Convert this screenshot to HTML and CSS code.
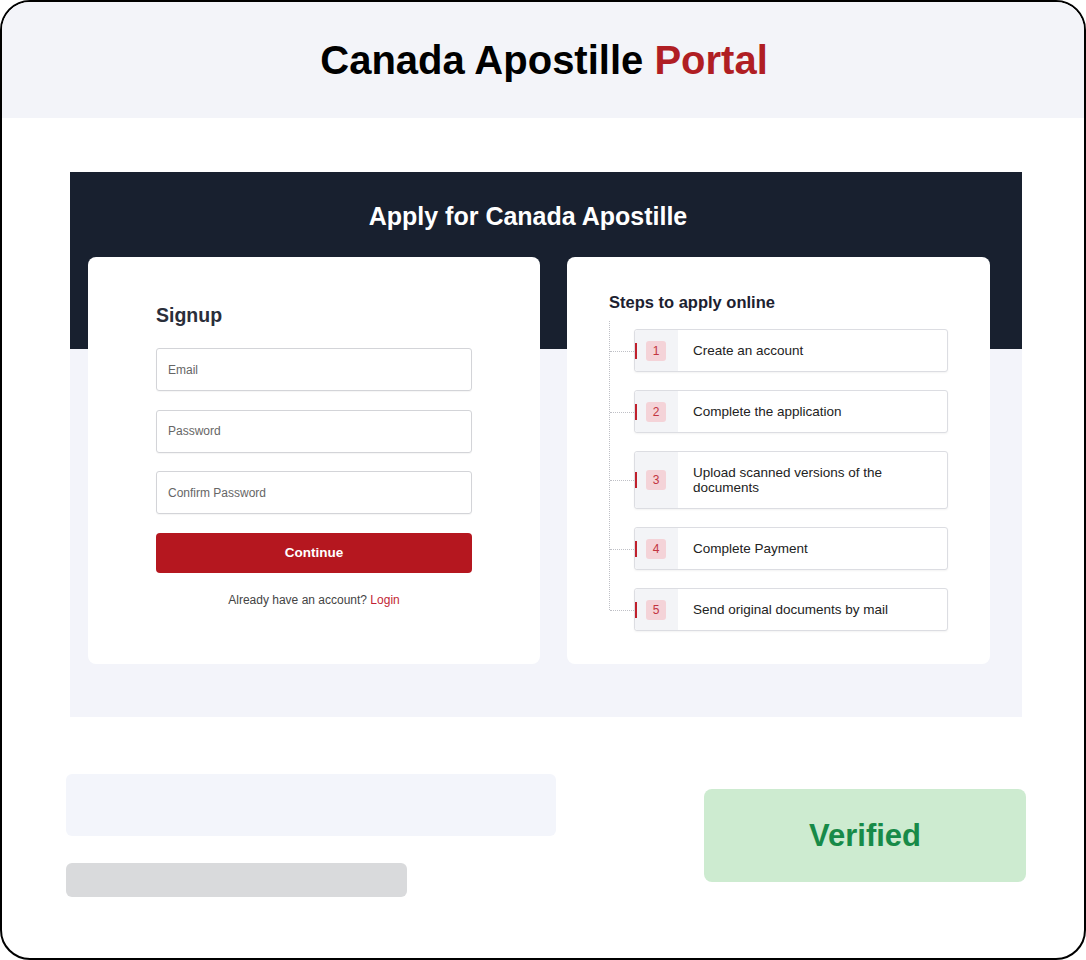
FILE: index.html
```html
<!DOCTYPE html>
<html lang="en">
<head>
<meta charset="utf-8">
<title>Canada Apostille Portal</title>
<link rel="stylesheet" href="styles.css">
</head>
<body>
<div class="frame">
  <header class="top">
    <h1 class="top-title">Canada Apostille <span class="accent">Portal</span></h1>
  </header>
  <main class="content">
    <section class="mock">
      <h2 class="mock-title">Apply for Canada Apostille</h2>
      <div class="cards">
        <div class="card signup">
          <h3 class="signup-title">Signup</h3>
          <div class="field">Email</div>
          <div class="field">Password</div>
          <div class="field">Confirm Password</div>
          <button class="btn" type="button">Continue</button>
          <p class="login">Already have an account? <a class="login-link">Login</a></p>
        </div>
        <div class="card steps">
          <h3 class="steps-title">Steps to apply online</h3>
          <ol class="step-list">
            <li class="step"><span class="num-col"><span class="num">1</span></span><span class="txt">Create an account</span></li>
            <li class="step"><span class="num-col"><span class="num">2</span></span><span class="txt">Complete the application</span></li>
            <li class="step tall"><span class="num-col"><span class="num">3</span></span><span class="txt">Upload scanned versions of the documents</span></li>
            <li class="step"><span class="num-col"><span class="num">4</span></span><span class="txt">Complete Payment</span></li>
            <li class="step"><span class="num-col"><span class="num">5</span></span><span class="txt">Send original documents by mail</span></li>
          </ol>
        </div>
      </div>
    </section>
    <div class="bottom">
      <div class="placeholders">
        <div class="ph ph-wide"></div>
        <div class="ph ph-short"></div>
      </div>
      <div class="verified">Verified</div>
    </div>
  </main>
</div>
</body>
</html>
```

FILE: styles.css
```css
* { box-sizing: border-box; }
html, body { margin: 0; padding: 0; background: #ffffff; }
body { font-family: "Liberation Sans", Arial, sans-serif; }

.frame {
  width: 1086px;
  height: 960px;
  border: 2px solid #000;
  border-radius: 30px;
  overflow: hidden;
  background: #fff;
}

.top {
  height: 116px;
  background: #f3f4f9;
  display: flex;
  align-items: center;
  justify-content: center;
}
.top-title {
  margin: 0;
  font-size: 40px;
  line-height: 40px;
  font-weight: 700;
  color: #000;
  position: relative;
  left: 1px;
}
.accent { color: #b01e24; }

.content { padding-top: 54px; }

.mock {
  margin: 0 62px 0 68px;
  background: linear-gradient(#18202f 0, #18202f 177px, #f3f4fa 177px);
  padding: 0 32px 53px 18px;
}
.mock-title {
  margin: 0;
  padding: 29px 22px 26px 0;
  text-align: center;
  color: #fff;
  font-size: 25px;
  line-height: 30px;
  font-weight: 700;
}

.cards {
  display: flex;
  gap: 27px;
}
.card {
  background: #fff;
  border-radius: 8px;
}
.signup {
  flex: 0 0 452px;
  padding: 46px 68px 57px 68px;
}
.steps {
  flex: 1 1 auto;
  padding: 35px 42px 33px 42px;
}

.signup-title {
  margin: 0 0 21px;
  font-size: 19.5px;
  line-height: 24px;
  font-weight: 700;
  color: #2a2e3a;
}
.field {
  height: 43px;
  border: 1px solid #d3d4d8;
  border-radius: 3px;
  box-shadow: 0 1px 1px rgba(0,0,0,0.04);
  padding-left: 11px;
  display: flex;
  align-items: center;
  font-size: 12px;
  color: #666;
  margin-bottom: 18.5px;
}
.btn {
  display: block;
  width: 100%;
  height: 40px;
  border: 0;
  border-radius: 4px;
  background: #b5171f;
  color: #fff;
  font-family: "Liberation Sans", Arial, sans-serif;
  font-size: 13.5px;
  font-weight: 700;
  padding: 0;
}
.login {
  margin: 20px 0 0;
  text-align: center;
  font-size: 12px;
  line-height: 14px;
  color: #444;
}
.login-link { color: #c21f34; }

.steps-title {
  margin: 0 0 17px;
  font-size: 16.5px;
  line-height: 20px;
  font-weight: 700;
  color: #1c2130;
}
.step-list {
  list-style: none;
  margin: 0;
  padding: 0 0 0 25px;
  position: relative;
  display: flex;
  flex-direction: column;
  gap: 18px;
}
.step-list::before {
  content: "";
  position: absolute;
  left: 0;
  top: -8px;
  bottom: 21px;
  border-left: 1px dotted #bfc0c6;
}
.step {
  position: relative;
  display: flex;
  min-height: 43px;
  border: 1px solid #dcdde2;
  border-radius: 3px;
  box-shadow: 0 1px 2px rgba(0,0,0,0.05);
  background: #fff;
}
.step.tall { min-height: 58px; }
.step::before {
  content: "";
  position: absolute;
  left: -25px;
  width: 24px;
  top: 50%;
  border-top: 1px dotted #bfc0c6;
}
.num-col {
  position: relative;
  flex: 0 0 43px;
  background: #f3f4f7;
  display: flex;
  align-items: center;
  padding-left: 11px;
  border-radius: 3px 0 0 3px;
}
.num-col::before {
  content: "";
  position: absolute;
  left: 0;
  top: 50%;
  width: 2px;
  height: 16px;
  margin-top: -8px;
  background: #c0202c;
}
.num {
  width: 20px;
  height: 20px;
  border-radius: 3px;
  background: #f4d3d8;
  color: #c23440;
  font-size: 12px;
  display: flex;
  align-items: center;
  justify-content: center;
}
.txt {
  align-self: center;
  padding: 0 40px 0 15px;
  font-size: 13.5px;
  line-height: 15px;
  color: #222;
}

.bottom {
  display: flex;
  justify-content: space-between;
  align-items: center;
  padding: 0 58px 0 64px;
  margin-top: 57px;
}
.ph { border-radius: 6px; }
.ph-wide {
  width: 490px;
  height: 62px;
  background: #f3f5fb;
}
.ph-short {
  width: 341px;
  height: 34px;
  margin-top: 27px;
  background: #d9dadc;
}
.verified {
  width: 322px;
  height: 93px;
  border-radius: 8px;
  background: #cdebd0;
  color: #178a48;
  font-size: 31px;
  font-weight: 700;
  display: flex;
  align-items: center;
  justify-content: center;
}
```
